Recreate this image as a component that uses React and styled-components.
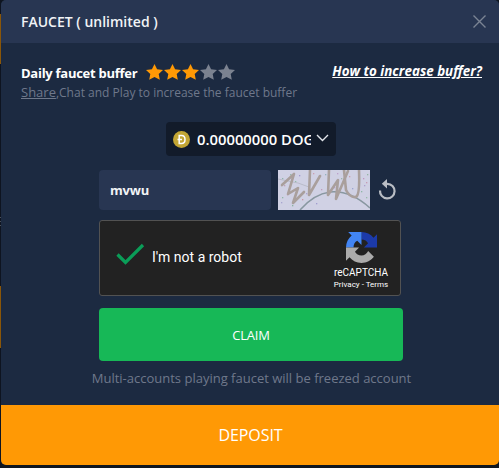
import React from "react";
import styled, { createGlobalStyle } from "styled-components";

/* STYLE(CSS)*/

const GlobalStyle = createGlobalStyle`
  * {
    box-sizing: border-box;
  }
  body {
    margin: 0;
    background: #0f1620;
    font-family: "Open Sans", "Noto Sans", sans-serif;
    overflow: hidden;
  }
  svg {
    display: block;
    flex: none;
  }
  button {
    font-family: inherit;
    border: 0;
    padding: 0;
    cursor: pointer;
  }
`;
const Page = styled.div`
  height: 468px;
  padding-left: 1px;
  background: linear-gradient(
      #0e1420 14px,
      #8a5608 14px 64px,
      #0e1420 64px 217px,
      #4b515c 217px 218px,
      #0e1420 218px 221px,
      #4b515c 221px 222px,
      #0e1420 222px 225px,
      #4b515c 225px 226px,
      #0e1420 226px 286px,
      #8a5608 286px 348px,
      #0e1420 348px
    )
    left / 1px 100% no-repeat #0f1620;
`;
const Modal = styled.div`
  display: flex;
  flex-direction: column;
  height: 465px;
  border-radius: 5px;
  overflow: hidden;
  background: #1c2a41;
  color: #fff;
`;
const Header = styled.div`
  display: flex;
  align-items: center;
  justify-content: space-between;
  height: 43px;
  padding: 0 13px 0 20px;
  background: #283652;
`;
const Title = styled.span`
  font-size: 14px;
  font-weight: 600;
  line-height: 20px;
  color: #f1f3f6;
`;
const CloseButton = styled.button`
  background: none;
`;
const Body = styled.div`
  display: flex;
  flex-direction: column;
  flex: 1;
  padding-top: 20px;
`;
const BufferRow = styled.div`
  display: flex;
  justify-content: space-between;
  height: 20px;
  padding: 0 17px 0 20px;
`;
const BufferLabel = styled.div`
  display: flex;
  align-items: center;
  font-size: 13px;
  font-weight: 700;
  letter-spacing: -0.27px;
  line-height: 20px;
`;
const Stars = styled.div`
  display: flex;
  gap: 1px;
  margin: -2px 0 0 9px;
`;
const HelpLink = styled.a`
  font-size: 13.4px;
  font-style: italic;
  font-weight: 700;
  line-height: 17px;
  text-decoration: underline;
`;
const Hint = styled.div`
  padding-left: 20px;
  font-size: 12px;
  line-height: 18px;
  color: #6f788b;
  white-space: nowrap;
  u {
    font-size: 13px;
  }
`;
const CoinSelect = styled.div`
  display: flex;
  align-items: center;
  width: 170px;
  height: 34px;
  margin: 20px 0 15px 165px;
  padding: 0 6px 0 7px;
  border-radius: 4px;
  background: #121b2a;
`;
const CoinAmount = styled.span`
  width: 114px;
  margin: 0 5px 0 7px;
  overflow: hidden;
  white-space: nowrap;
  font-size: 14.8px;
  font-weight: 600;
  line-height: 20px;
`;
const Chevron = styled.svg`
  margin-top: -2px;
`;
const CaptchaRow = styled.div`
  display: flex;
  align-items: center;
  height: 40px;
  margin: -1px 0 0 98px;
`;
const CaptchaInput = styled.input`
  width: 172px;
  height: 40px;
  margin-right: 7px;
  padding: 0 11px;
  border: 0;
  border-radius: 4px;
  outline: none;
  background: #283652;
  color: #f1f3f6;
  font-family: inherit;
  font-size: 13px;
  font-weight: 700;
  letter-spacing: -0.2px;
`;
const RefreshButton = styled.button`
  margin: -2px 0 0 8px;
  background: none;
`;
const Robot = styled.div`
  display: flex;
  width: 302px;
  height: 76px;
  margin: 10px 0 12px 98px;
  border: 1px solid #525252;
  border-radius: 3px;
  background: #222;
  font-family: Roboto, sans-serif;
`;
const RobotCheck = styled.div`
  display: flex;
  align-items: center;
  flex: 1;
  padding-left: 16px;
`;
const CheckMark = styled.svg`
  margin-top: -8px;
`;
const RobotText = styled.span`
  margin-left: 7px;
  margin-top: -2px;
  font-size: 14px;
  line-height: 17px;
`;
const RobotBrand = styled.div`
  display: flex;
  flex-direction: column;
  align-items: center;
  width: 78px;
  padding-top: 11px;
`;
const BrandName = styled.span`
  margin-top: 3px;
  font-size: 10px;
  line-height: 13px;
`;
const BrandLinks = styled.span`
  font-size: 8px;
  line-height: 12px;
`;
const ClaimButton = styled.button`
  width: 304px;
  height: 53px;
  margin-left: 98px;
  border-radius: 4px;
  background: #17b857;
  color: #fff;
  font-size: 13px;
  letter-spacing: -0.2px;
`;
const Note = styled.div`
  margin-top: 8px;
  padding-left: 3px;
  text-align: center;
  font-size: 13px;
  line-height: 18px;
  color: #6f788b;
`;
const DepositButton = styled.button`
  width: 100%;
  height: 60px;
  padding-left: 1px;
  background: #ff9905;
  color: #fff;
  font-size: 16px;
  letter-spacing: -0.1px;
`;

const specks = [
  [4, 8, "#70a890"], [9, 24, "#bd80a6"], [14, 35, "#6ca783"], [21, 5, "#8c81c4"],
  [24, 29, "#c07e8c"], [31, 12, "#71ad87"], [38, 33, "#8b87c6"], [43, 19, "#b989aa"],
  [50, 10, "#84b59b"], [56, 17, "#b08cc0"], [63, 8, "#83ac93"], [88, 12, "#c3889f"],
  [74, 18, "#8793c7"], [89, 4, "#7aac89"], [85, 8, "#b87fb0"], [88, 27, "#7fb393"],
  [6, 15, "#b98ba3"], [17, 11, "#77b28f"], [28, 23, "#9b8ec9"], [35, 3, "#c78a9c"],
  [47, 4, "#7ba8b0"], [59, 3, "#b58fc0"], [71, 6, "#c58b94"], [83, 21, "#74ac8e"],
  [3, 32, "#9693c8"], [12, 4, "#7db196"], [86, 15, "#9c8cc6"], [4, 27, "#74ac8e"],
];

function Star({ active }) {
  return (
    <svg width="17" height="16" viewBox="0 0 17 16">
      <path
        d="M8.500 0L11.100 5.300L17 6L12.700 10L13.800 15.700L8.500 12.900L3.200 15.700L4.300 10L0 6L5.900 5.300Z"
        fill={active ? "#ff9905" : "#7b8290"}
      />
    </svg>
  );
}

function CaptchaImage() {
  return (
    <svg width="92" height="40" viewBox="0 0 92 40">
      <rect width="92" height="40" fill="#d0d1e4" />
      {specks.map(([x, y, fill]) => (
        <rect key={`${x}-${y}`} x={x} y={y} width="1.3" height="1.3" fill={fill} opacity="0.7" />
      ))}
      <path d="M0 9L20 13L31 17" stroke="#b9bbc9" strokeWidth="1" fill="none" />
      <path d="M22 40Q36 24 52 22Q72 20 92 38" stroke="#8897a0" strokeWidth="1.6" fill="none" />
      <g stroke="#a99f9c" strokeWidth="2.6" fill="none" strokeLinecap="round" strokeLinejoin="round">
        <path d="M4 15L16 4L10 24L20 18L15 33L26 22" />
        <path d="M32 0L31 25L42 6" />
        <path d="M51 0L50 25L60 10L58 29L70 1" />
        <path d="M66 0L68 20Q72 28 78 27Q82 25 81 0" />
      </g>
    </svg>
  );
}

function RecaptchaLogo() {
  return (
    <svg width="31" height="31" viewBox="0 0 64 64">
      <path
        fill="#1c3aa9"
        d="M64 32V4.500L56.800 11.700C50.900 4.500 42 0 32 0V15.500C39 15.500 43 18.500 45.500 23L37 32Z"
      />
      <path
        fill="#4285f4"
        d="M32 0H4.500L11.700 7.200C4.500 13.100 0 22 0 32H15.500C15.500 25 18.500 20.500 23.200 18L32 27Z"
      />
      <path
        fill="#ababab"
        d="M0 32V59.500L7.200 52.300C13.100 59.500 22 64 32 64C42.500 64 51.800 59 57.600 51.200L45.800 39.300C43 45 38 48.500 32 48.500C26 48.500 21 46 18.500 41L27 32Z"
      />
    </svg>
  );
}

function App() {
  return (
    <Page>
      <GlobalStyle />
      <Modal>
        <Header>
          <Title>FAUCET ( unlimited )</Title>
          <CloseButton aria-label="close">
            <svg width="13" height="13" viewBox="0 0 13 13">
              <path d="M0.500 0.500L12.500 12.500M12.500 0.500L0.500 12.500" stroke="#7b8494" strokeWidth="1.400" />
            </svg>
          </CloseButton>
        </Header>
        <Body>
          <BufferRow>
            <BufferLabel>
              Daily faucet buffer
              <Stars>
                {[1, 2, 3, 4, 5].map(n => (
                  <Star key={n} active={n <= 3} />
                ))}
              </Stars>
            </BufferLabel>
            <HelpLink>How to increase buffer?</HelpLink>
          </BufferRow>
          <Hint>
            <u>Share</u>,Chat and Play to increase the faucet buffer
          </Hint>
          <CoinSelect>
            <svg width="17" height="17" viewBox="0 0 17 17">
              <circle cx="8.500" cy="8.500" r="8.500" fill="#c3a634" />
              <path d="M6.200 4.500H8.500Q12 4.500 12 8.500T8.500 12.500H6.200ZM4.500 8.500H9" fill="none" stroke="#fff" strokeWidth="1.500" />
            </svg>
            <CoinAmount>0.00000000 DOGE</CoinAmount>
            <Chevron width="13" height="8" viewBox="0 0 13 8">
              <path d="M1 1L6.500 6.500L12 1" fill="none" stroke="#e4e7ec" strokeWidth="1.400" />
            </Chevron>
          </CoinSelect>
          <CaptchaRow>
            <CaptchaInput defaultValue="mvwu" spellCheck={false} />
            <CaptchaImage />
            <RefreshButton aria-label="refresh">
              <svg width="19" height="21" viewBox="0 0 19 21">
                <path d="M2 11.500A7.300 7.300 0 1 0 9.300 4.800H7" fill="none" stroke="#b9bdc4" strokeWidth="2.200" />
                <path d="M9 0V9.600L3.800 4.800Z" fill="#b9bdc4" />
              </svg>
            </RefreshButton>
          </CaptchaRow>
          <Robot>
            <RobotCheck>
              <CheckMark width="29" height="22" viewBox="0 0 29 22">
                <path d="M1.500 11.500L9.500 19.500L27 2" fill="none" stroke="#0a9d58" strokeWidth="3.200" />
              </CheckMark>
              <RobotText>I'm not a robot</RobotText>
            </RobotCheck>
            <RobotBrand>
              <RecaptchaLogo />
              <BrandName>reCAPTCHA</BrandName>
              <BrandLinks>Privacy - Terms</BrandLinks>
            </RobotBrand>
          </Robot>
          <ClaimButton>CLAIM</ClaimButton>
          <Note>Multi-accounts playing faucet will be freezed account</Note>
        </Body>
        <DepositButton>DEPOSIT</DepositButton>
      </Modal>
    </Page>
  );
}

export default App;
